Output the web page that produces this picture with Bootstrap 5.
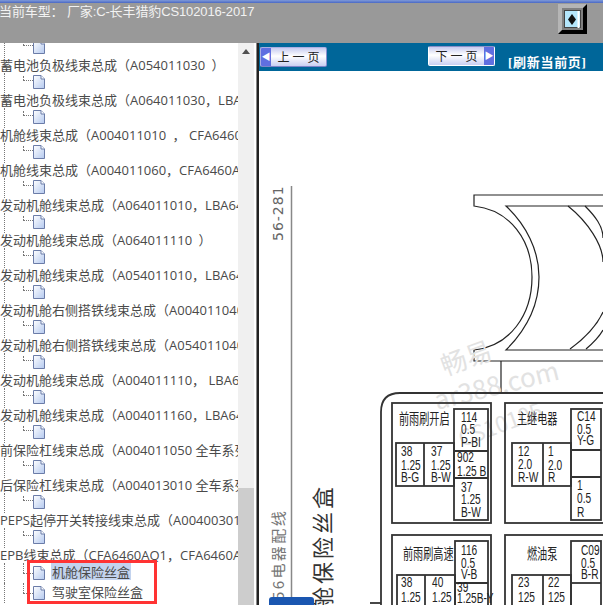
<!DOCTYPE html>
<html lang="zh">
<head>
  <meta charset="UTF-8">
  <meta name="viewport" content="width=device-width, initial-scale=1.0">
  <title>电路图</title>
  <link href="https://cdn.jsdelivr.net/npm/bootstrap@5.3.3/dist/css/bootstrap.min.css" rel="stylesheet">
  <style>
    html, body { height: 605px; overflow: hidden; background: #fff; }
    body { font-family: "Noto Sans CJK SC", "Liberation Sans", sans-serif; color: #4a4a4a; }

    .page-wrap { width: 603px; height: 605px; position: relative; overflow: hidden; }
    .top-line { height: 3px; background: linear-gradient(#7f9ad8, #4a68c4); }
    .top-head { height: 40px; background: #999; color: #f2f2f2; padding-right: 16px; }
    .car-title { font: 13px/1 "Liberation Sans", "Noto Sans CJK SC", sans-serif; padding-top: 2px; margin-left: -1px; white-space: pre; letter-spacing: -.12px; }

    .toggle-btn { width: 29px; height: 30px; margin-top: 1px; background: #808080;
      border: 4px solid; border-color: #b5b5b5 #000 #000 #b5b5b5; padding: 2px; }
    .toggle-in { height: 100%; background: #b4e6fb; border: 1px solid #444; display: flex;
      align-items: center; justify-content: center; }

    .main-area { height: 562px; }
    .tree-pane { width: 238px; height: 562px; overflow: hidden; position: relative; }
    .tree-first { margin-top: -5px; }
    .tree-icon-wrap { height: 20px; position: relative; }
    .tree-text { height: 15px; font: 13px/15px "Open Sans", "Noto Sans CJK SC", sans-serif; white-space: nowrap; }
    .dot-v1 { position: absolute; left: 4px; top: 0; height: 20px; border-left: 1px dotted #777; }
    .dot-v2 { position: absolute; left: 23px; top: 3px; height: 4px; border-left: 1px dotted #777; }
    .dot-h { position: absolute; left: 23px; top: 7px; width: 10px; border-top: 1px dotted #777; }
    .doc-icon { position: absolute; left: 33px; top: 2px; width: 12px; height: 14px; }

    .leaf-row { height: 20px; position: relative; font-size: 13px; line-height: 17px; }
    .leaf-row .dot-h { top: 10px; }
    .leaf-row .dot-v2 { top: 0; height: 10px; }
    .leaf-row .doc-icon { top: 3px; }
    .leaf-text { position: absolute; left: 51px; top: 0; padding: 0 1px; }
    .leaf-on { background: #c3d3ee; height: 17px; }

    .scroll-track { width: 16px; height: 562px; background: #f0f0f0; position: relative; }
    .scroll-up { position: absolute; left: 4px; top: 6px; width: 0; height: 0;
      border-left: 4px solid transparent; border-right: 4px solid transparent; border-bottom: 5px solid #505050; }
    .scroll-thumb { position: absolute; left: 0; right: 0; top: 445px; bottom: 0; background: #cdcdcd; }
    .splitter { width: 3px; height: 562px; margin-left: 2px; background: #222; border-left: 1px solid #888; }

    .view-pane { width: 344px; height: 562px; position: relative; overflow: hidden; }
    .view-bar { height: 28px; background: #006699; position: relative; }
    .page-btn { position: absolute; width: 67px; height: 20px; padding: 0; border: 1px solid #7d84c8;
      border-radius: 2px; background: linear-gradient(#c6cbf0, #fff 45%, #c9cff2);
      font: 12px/18px "Noto Sans CJK SC", sans-serif; letter-spacing: 3px; color: #222; display: flex; overflow: hidden; }
    .page-prev { left: 1px; top: 4px; border-color: #a9aee2 #8a90d0 #7d84c8 #a9aee2; }
    .page-next { left: 169px; top: 3px; border-color: #8a90c8 #fff #fff #fff; }
    .btn-arrow { width: 10px; height: 100%; background: #5f6fe0; color: #fff; font-size: 9px; letter-spacing: 0;
      flex: none; display: flex; align-items: center; justify-content: center; }
    .btn-label { flex: 1; text-align: center; padding-left: 3px; white-space: nowrap; }
    .refresh-link { position: absolute; left: 249px; top: 12px; color: #fff; font: bold 13px/16px "Liberation Serif", "Noto Sans CJK SC", serif; letter-spacing: .7px; text-decoration: none; white-space: nowrap; }

    .diagram { position: absolute; left: 0; top: 0; width: 344px; height: 562px; }
    .red-box { position: absolute; left: 27px; top: 560px; width: 130px; height: 44px; border: 3px solid #f33; }
    .bottom-tab { position: absolute; left: 269px; top: 597px; width: 45px; height: 8px; background: #1a56b0; border-radius: 3px 3px 0 0; }
  </style>
</head>
<body>
<div class="page-wrap">
  <div class="top-line"></div>
  <div class="top-head d-flex justify-content-between">
    <div class="car-title">当前车型： 厂家:C-长丰猎豹CS102016-2017</div>
    <div class="toggle-btn"><div class="toggle-in">
      <svg width="15" height="17" viewBox="0 0 15 17"><path d="M7 3 11 8.5 7 14 3 8.5Z" fill="#111"/><path d="M13.5 0V17" stroke="#fff" stroke-width="2"/></svg>
    </div></div>
  </div>

  <div class="main-area d-flex">
    <!-- tree -->
    <div class="tree-pane" id="tree"></div>
    <div class="scroll-track"><div class="scroll-up"></div><div class="scroll-thumb"></div></div>
    <div class="splitter"></div>

    <!-- right side -->
    <div class="view-pane">
      <div class="view-bar">
        <button class="page-btn page-prev" type="button"><span class="btn-arrow">◀</span><span class="btn-label">上一页</span></button>
        <button class="page-btn page-next" type="button"><span class="btn-label">下一页</span><span class="btn-arrow">▶</span></button>
        <a class="refresh-link" href="#">[刷新当前页]</a>
      </div>

      <!-- diagram coords are page coords: pane origin is 259,43 -->
      <svg class="diagram" viewBox="259 43 344 562" style="pointer-events:none">
        <g fill="none" stroke="#222" stroke-width="1.2">
          <path d="M603 195H474V206C510 210 532 240 532 277 532 315 510 346 474 350V361H603"/>
          <path d="M603 206H506C526 225 539 250 539 277 539 305 526 330 506 350H603"/>
          <path d="M568 206C588 222 603 245 603 262M585 206C595 216 603 226 603 238"/>
          <path d="M570 349C585 338 597 325 603 312M586 349C593 343 599 337 603 330"/>
          <path d="M501 361V393"/>
        </g>
        <line x1="291.5" y1="186" x2="291.5" y2="605" stroke="#888" stroke-width="1.5"/>
        <text transform="translate(283 241) rotate(-90)" font-family="DejaVu Sans" font-size="14" letter-spacing="1" fill="#666">56-281</text>
        <text transform="translate(284 600) rotate(-90)" font-family="Noto Sans CJK SC" font-size="15" letter-spacing="2.4" fill="#777">56电器配线</text>
        <text transform="translate(331 634) rotate(-90)" font-family="Noto Sans CJK SC" font-size="22" letter-spacing="3" fill="#333">机舱保险丝盒</text>

        <!-- watermark -->
        <g fill="#e2e2e2" font-family="Noto Sans CJK SC">
          <text transform="translate(445 376) rotate(-20)" font-size="26">畅易</text>
          <text transform="translate(437 410) rotate(-14)" font-size="26">ar388.com</text>
          <text transform="translate(462 447) rotate(-20)" font-size="22">CS10105</text>
        </g>

        <!-- fuse box -->
        <g fill="none" stroke="#333" stroke-width="1.8">
          <path d="M381 605V412Q381 393 400 393H603"/>
          <path d="M370 603H381"/>
          <rect x="392" y="403" width="99" height="120"/>
          <rect x="454" y="409" width="34" height="111"/>
          <path d="M454 451H488M454 478H488"/>
          <rect x="396" y="443" width="58" height="43"/>
          <path d="M424 443V486"/>
          <rect x="505" y="403" width="110" height="120"/>
          <rect x="571" y="409" width="30" height="111"/>
          <path d="M571 450H601M571 477H601"/>
          <rect x="512" y="443" width="59" height="43"/>
          <path d="M543 443V486"/>
          <rect x="392" y="535" width="99" height="90"/>
          <rect x="455" y="541" width="33" height="80"/>
          <path d="M455 583H488"/>
          <rect x="397" y="575" width="58" height="50"/>
          <path d="M425 575V625"/>
          <rect x="505" y="535" width="110" height="90"/>
          <rect x="571" y="541" width="30" height="80"/>
          <path d="M571 583H601"/>
          <rect x="512" y="575" width="59" height="50"/>
          <path d="M543 575V625"/>
        </g>
        <g id="cells" fill="#222" font-family="Liberation Sans" font-size="13"></g>
      </svg>
    </div>
  </div>

  <div class="red-box"></div>
  <div class="bottom-tab"></div>
</div>

<script src="https://cdn.jsdelivr.net/npm/bootstrap@5.3.3/dist/js/bootstrap.bundle.min.js"></script>
<script>
  // tree rows (en space before the closing paren, the original font sets it further out)
  const rows = [
    '蓄电池负极线束总成（A054011030\u2002）',
    '蓄电池负极线束总成（A064011030，LBA6460AQ1）',
    '机舱线束总成（A004011010\u2002， CFA6460AQ1）',
    '机舱线束总成（A004011060，CFA6460AQ1）',
    '发动机舱线束总成（A064011010，LBA6460AQ1）',
    '发动机舱线束总成（A064011110\u2002）',
    '发动机舱线束总成（A054011010，LBA6460AQ1）',
    '发动机舱右侧搭铁线束总成（A004011040）',
    '发动机舱右侧搭铁线束总成（A054011040）',
    '发动机舱线束总成（A004011110， LBA6460）',
    '发动机舱线束总成（A004011160，LBA6460）',
    '前保险杠线束总成（A004011050 全车系列）',
    '后保险杠线束总成（A004013010 全车系列）',
    'PEPS起停开关转接线束总成（A004003010）',
    'EPB线束总成（CFA6460AQ1，CFA6460AQ2）'
  ];
  const docIcon = `<svg class="doc-icon" viewBox="0 0 12 14"><defs><linearGradient id="dg" x1="0" y1="0" x2="1" y2="1"><stop offset="0" stop-color="#fff"/><stop offset="1" stop-color="#b4c9ef"/></linearGradient></defs><path d="M.5 .5H8L11.5 4V13.5H.5Z" fill="url(#dg)" stroke="#6b7ca8"/><path d="M8 .5V4H11.5" fill="#fff" stroke="#6b7ca8"/></svg>`;
  const dots = `<i class="dot-v1"></i><i class="dot-v2"></i><i class="dot-h"></i>`;

  let html = `<div class="tree-icon-wrap tree-first">${dots}${docIcon}</div>`;
  rows.forEach((t, i) => {
    html += `<div class="tree-text">${t}</div>`;
    if (i < rows.length - 1) html += `<div class="tree-icon-wrap">${dots}${docIcon}</div>`;
  });
  html += `<div class="leaf-row">${dots}${docIcon}<span class="leaf-text leaf-on">机舱保险丝盒</span></div>`;
  html += `<div class="leaf-row">${dots}${docIcon}<span class="leaf-text">驾驶室保险丝盒</span></div>`;
  document.getElementById('tree').innerHTML = html;

  // fuse box cell labels: x, then [baseline, text] per line. scanned lettering is narrow and tall
  const cells = [
    [461, [[422, '114'], [434, '0.5'], [447, 'P-BI']]],
    [457, [[462, '902'], [476, '1.25 B']]],
    [461, [[492, '37'], [504, '1.25'], [517, 'B-W']]],
    [401, [[456, '38'], [470, '1.25'], [482, 'B-G']]],
    [431, [[456, '37'], [470, '1.25'], [482, 'B-W']]],
    [577, [[421, 'C14'], [434, '0.5'], [445, 'Y-G']]],
    [518, [[456, '12'], [469, '2.0'], [482, 'R-W']]],
    [548, [[456, '1'], [470, '2.0'], [482, 'R']]],
    [577, [[490, '1'], [503, '0.5'], [517, 'R']]],
    [461, [[555, '116'], [568, '0.5'], [579, 'V-B']]],
    [581, [[555, 'C09'], [568, '0.5'], [579, 'B-R']]],
    [401, [[587, '38'], [602, '1.25']]],
    [432, [[587, '40'], [602, '1.25']]],
    [457, [[592, '39'], [603, '1.25B-Y']]],
    [518, [[587, '23'], [602, '125']]],
    [548, [[587, '22'], [602, '125']]]
  ];
  let svg = '';
  cells.forEach(c => {
    c[1].forEach(l => { svg += `<text transform="translate(${c[0]} ${l[0]}) scale(.78 1.15)">${l[1]}</text>`; });
  });
  const labels = [[399, 424, '前雨刷开启'], [517, 424, '主继电器'], [403, 559, '前雨刷高速'], [527, 559, '燃油泵']];
  labels.forEach(l => { svg += `<text transform="translate(${l[0]} ${l[1]}) scale(.78 1.1)" font-family="Noto Sans CJK SC" font-size="13">${l[2]}</text>`; });
  document.getElementById('cells').innerHTML = svg;
</script>
</body>
</html>
